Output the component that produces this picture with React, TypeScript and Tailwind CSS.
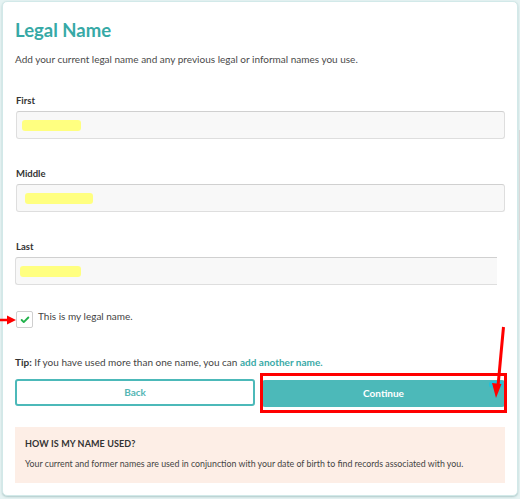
import { Check } from "lucide-react";

function Field({ label, hl, narrow }: { label: string; hl: string; narrow?: boolean }) {
  return (
    <div className="flex flex-col">
      <span className="text-[9.5px] font-bold text-[#333] leading-[12px] pl-[1px]">{label}</span>
      <div
        className={`mt-[4px] h-[28px] rounded-[3px] bg-[#f8f8f8] border border-[#dedede] border-t-[#d0d0d0] flex items-center ${
          narrow ? "mr-[8px] border-r-0 rounded-r-none" : "ml-[1px]"
        }`}
      >
        <div className={`${hl} h-[11px] rounded-[3px] bg-[#ffff80]`} />
      </div>
    </div>
  );
}

export default function App() {
  return (
    <div
      className="relative w-[520px] h-[499px] bg-[#e6f3f3] overflow-hidden"
      style={{ fontFamily: "Lato, 'Open Sans', sans-serif" }}
    >
      {/* Card */}
      <div className="absolute left-[2px] top-[1px] w-[516px] h-[495px] bg-white rounded-[5px] border border-[#d2e9e9] shadow-[0_1px_2px_rgba(120,160,160,0.5)]">
        <div className="flex flex-col pl-[12px] pr-[12px]">
          <h1 className="mt-[16px] text-[18.5px] leading-[24px] font-bold text-[#36a9a6]">Legal Name</h1>
          <p className="mt-[11px] text-[10px] leading-[12px] text-[#4a4a4a]">
            Add your current legal name and any previous legal or informal names you use.
          </p>

          <div className="mt-[30px] flex flex-col gap-[29px]">
            <Field label="First" hl="ml-[5px] w-[59px]" />
            <Field label="Middle" hl="ml-[8px] w-[68px]" />
            <Field label="Last" hl="ml-[4px] w-[61px]" narrow />
          </div>

          <label className="mt-[26px] flex items-start gap-[5px] pl-[1px]">
            <span className="w-[17px] h-[17px] rounded-[2px] border border-[#cfcfcf] bg-white flex items-center justify-center">
              <Check className="w-[10px] h-[10px] text-[#22b24c]" strokeWidth={4.5} />
            </span>
            <span className="text-[10px] leading-[12px] text-[#444] -mt-[1px]">This is my legal name.</span>
          </label>

          <p className="mt-[28px] text-[10px] leading-[12px] text-[#444]">
            <span className="font-bold text-[#333]">Tip:</span> If you have used more than one name, you can{" "}
            <span className="font-bold text-[#3aaaa7]">add another name.</span>
          </p>

          <div className="mt-[11px] flex gap-[7px]">
            <button className="w-[241px] h-[27px] rounded-[3px] border-2 border-[#4cb9b9] text-[#55b6b4] text-[10px] font-bold bg-white">
              Back
            </button>
            <div className="relative w-[244px]">
              <button className="w-full h-[27px] rounded-[3px] bg-[#4cb9b9] text-white text-[10px] font-bold">
                Continue
              </button>
              <div className="absolute right-[2px] top-[2px] w-[14px] h-[7px] rounded-full bg-[#1fc2dc]" />
              <div className="absolute -left-[2px] -top-[6px] w-[247px] h-[40px] border-[3px] border-[#ff0000]" />
            </div>
          </div>

          <div className="mt-[20px] h-[56px] bg-[#fdeee6] flex flex-col px-[10px]">
            <span className="mt-[11px] text-[9px] leading-[12px] font-bold text-[#333] tracking-[0.1px]">HOW IS MY NAME USED?</span>
            <span className="mt-[8px] text-[8.8px] leading-[12px] text-[#444]">
              Your current and former names are used in conjunction with your date of birth to find records associated with you.
            </span>
          </div>
        </div>
      </div>

      {/* scrollbar-ish line */}
      <div className="absolute left-[519px] top-[130px] w-[1px] h-[110px] bg-[#d8d8d8]" />

      {/* Annotation arrows */}
      <svg className="absolute inset-0 pointer-events-none" width="520" height="499">
        <line x1="0" y1="320" x2="8" y2="320" stroke="#ff0000" strokeWidth="2.5" />
        <polygon points="7,315.5 16,320 7,324.5" fill="#ff0000" />
        <line x1="503.5" y1="327" x2="498" y2="386" stroke="#ff0000" strokeWidth="3" />
        <polygon points="492,383 501.5,384 496,398" fill="#ff0000" />
      </svg>
    </div>
  );
}
